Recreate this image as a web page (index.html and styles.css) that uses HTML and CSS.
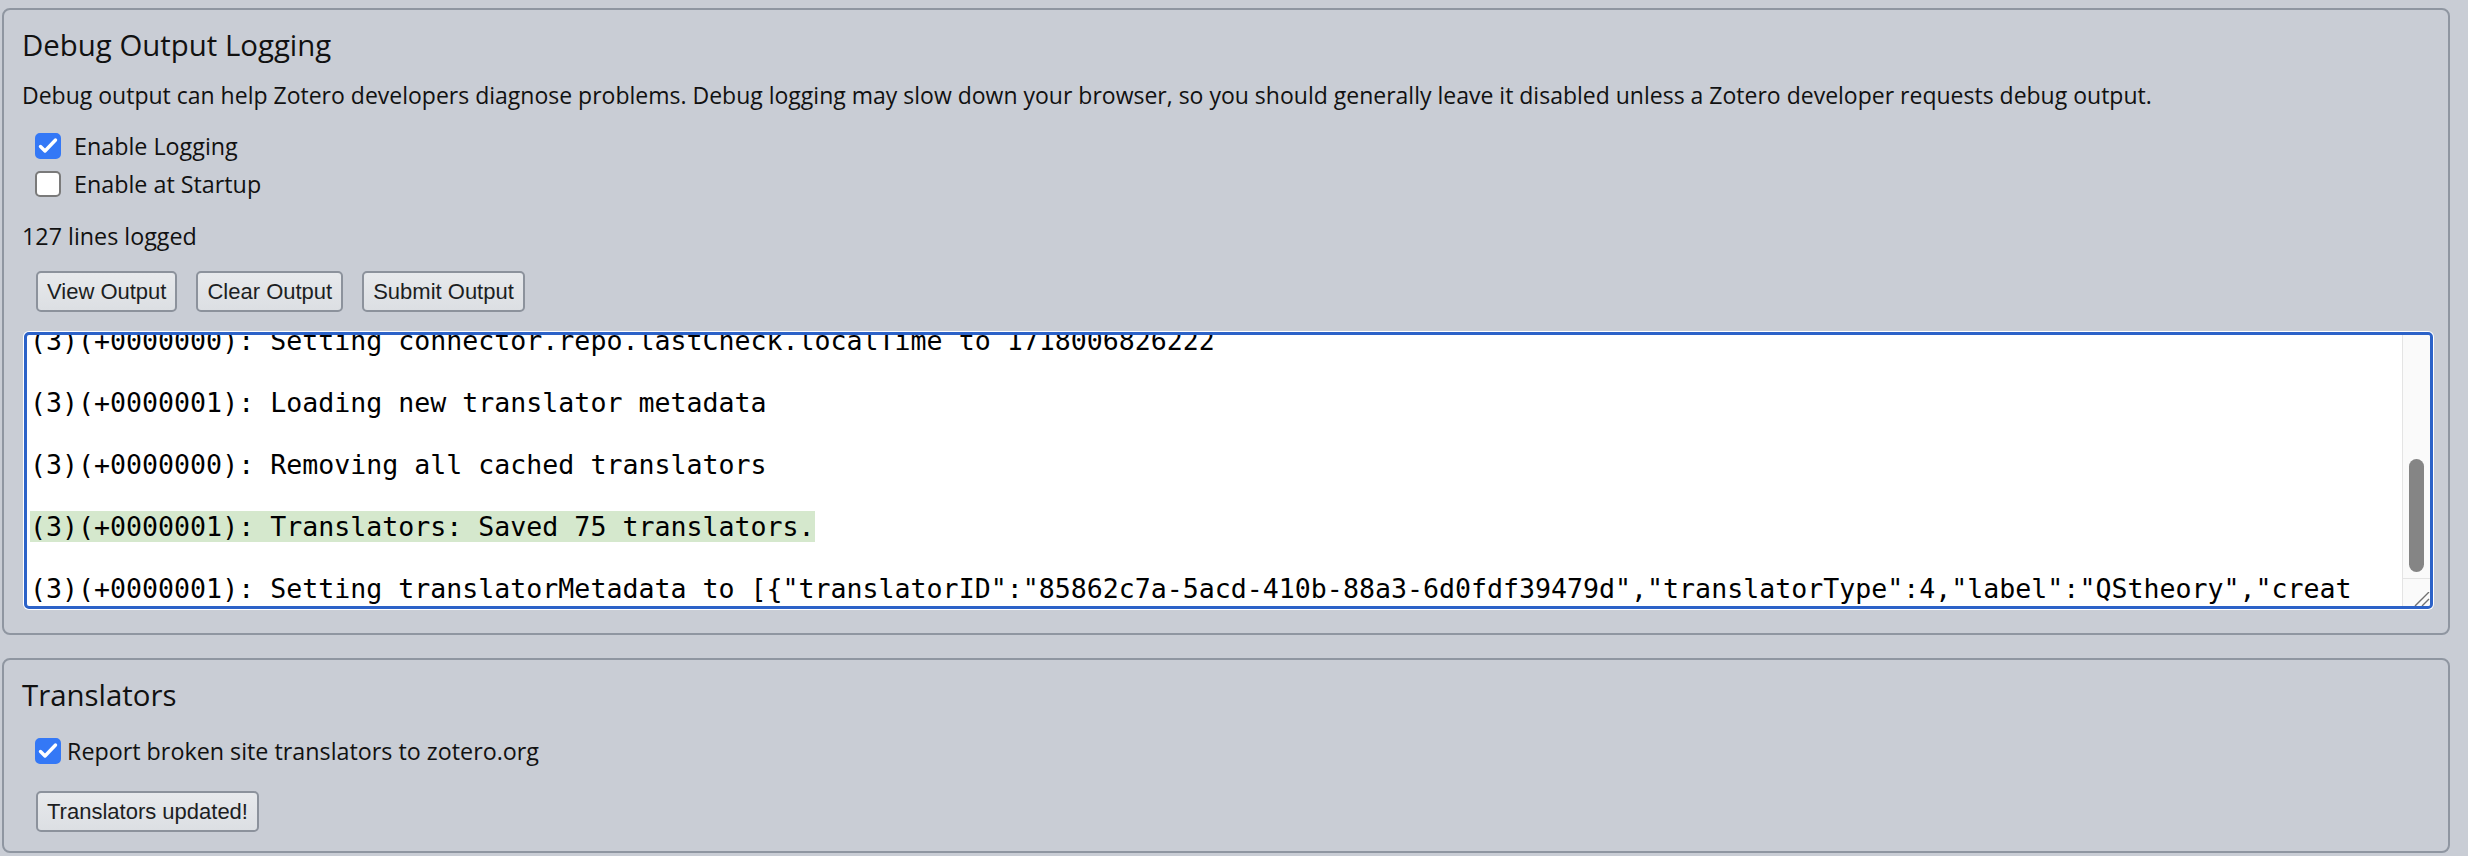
FILE: index.html
```html
<!DOCTYPE html>
<html lang="en">

<head>
    <meta charset="UTF-8">
    <meta name="viewport" content="width=device-width, initial-scale=1.0">
    <title>Advanced</title>
    <link rel="stylesheet" href="styles.css">
</head>

<body>
    <!-- debug output section -->
    <section class="panel">
        <h2 class="panel-title">Debug Output Logging</h2>
        <p class="panel-text">Debug output can help Zotero developers diagnose problems. Debug logging may slow down your browser, so you should generally leave it disabled unless a Zotero developer requests debug output.</p>

        <div class="option-list">
            <label class="option">
                <span class="box box-on">
                    <svg width="22" height="22" viewBox="0 0 22 22"><path d="M3.5 11.5 L8 16 L18.5 5" fill="none" stroke="#fff" stroke-width="3.4" stroke-linecap="round" stroke-linejoin="round"/></svg>
                </span>
                <span>Enable Logging</span>
            </label>
            <label class="option">
                <span class="box"></span>
                <span>Enable at Startup</span>
            </label>
        </div>

        <p class="line-count">127 lines logged</p>

        <div class="button-row">
            <button class="btn">View Output</button>
            <button class="btn">Clear Output</button>
            <button class="btn">Submit Output</button>
        </div>

        <div class="log-box">
            <div class="log-lines">
                <div class="log-inner">
                    <div class="log-line">(3)(+0000000): Setting connector.repo.lastCheck.localTime to 1718006826222</div>
                    <div class="log-line">(3)(+0000001): Loading new translator metadata</div>
                    <div class="log-line">(3)(+0000000): Removing all cached translators</div>
                    <div class="log-line"><span class="log-hl">(3)(+0000001): Translators: Saved 75 translators.</span></div>
                    <div class="log-line">(3)(+0000001): Setting translatorMetadata to [{"translatorID":"85862c7a-5acd-410b-88a3-6d0fdf39479d","translatorType":4,"label":"QStheory","creator":"Zotero"}]</div>
                </div>
            </div>
            <div class="log-scroll">
                <div class="log-thumb"></div>
                <div class="log-corner">
                    <svg width="16" height="14" viewBox="0 0 16 14"><path d="M1 14 L15 0 M8 14 L15 7" stroke="#707070" stroke-width="1.4" fill="none"/></svg>
                </div>
            </div>
        </div>
    </section>

    <!-- translators section -->
    <section class="panel">
        <h2 class="panel-title">Translators</h2>
        <div class="option-list option-list-tr">
            <label class="option option-tight">
                <span class="box box-on">
                    <svg width="22" height="22" viewBox="0 0 22 22"><path d="M3.5 11.5 L8 16 L18.5 5" fill="none" stroke="#fff" stroke-width="3.4" stroke-linecap="round" stroke-linejoin="round"/></svg>
                </span>
                <span>Report broken site translators to zotero.org</span>
            </label>
        </div>
        <div class="button-row button-row-tr">
            <button class="btn">Translators updated!</button>
        </div>
    </section>
</body>

</html>
```

FILE: styles.css
```css
body {
    margin: 0;
    padding: 8px 18px 0 2px;
    background-color: #c9cdd5;
    font-family: "Open Sans", sans-serif;
    color: #111;
    overflow: hidden;
}

.panel {
    border: 2px solid #8f96a1;
    border-radius: 8px;
    padding: 17px 15px 19px 18px;
}

.panel + .panel {
    margin-top: 23px;
}

.panel-title {
    margin: 0;
    font-size: 29.4px;
    line-height: 36px;
    font-weight: 400;
}

.panel-text {
    margin: 17px 0 0;
    font-size: 23px;
    line-height: 30px;
}

.option-list {
    margin-top: 17px;
}

.option-list-tr {
    margin-top: 19px;
}

.option {
    display: flex;
    align-items: center;
    gap: 13px;
    height: 38px;
    padding-left: 13px;
    font-size: 23.3px;
}

.option-tight {
    gap: 6px;
}

.box {
    width: 26px;
    height: 26px;
    box-sizing: border-box;
    border: 2px solid #7a7a7a;
    border-radius: 5px;
    background-color: #fff;
    display: flex;
    align-items: center;
    justify-content: center;
}

.box-on {
    background-color: #3478f6;
    border-color: #3478f6;
}

.line-count {
    margin: 18px 0 0;
    font-size: 23.3px;
    line-height: 30px;
}

.button-row {
    display: flex;
    gap: 19px;
    margin-top: 20px;
    padding-left: 14px;
}

.button-row-tr {
    margin-top: 21px;
}

.btn {
    height: 41px;
    padding: 0 9px;
    border: 2px solid #8c929c;
    border-radius: 5px;
    background: linear-gradient(#e7e9ec, #dcdfe3);
    font-family: "Liberation Sans", Arial, sans-serif;
    font-size: 22px;
    color: #1c1e22;
}

.log-box {
    display: flex;
    height: 277px;
    box-sizing: border-box;
    margin: 20px 0 5px 2px;
    border: 3px solid #2c62c8;
    border-radius: 5px;
    box-shadow: 0 0 0 1px #fff;
    background-color: #fff;
    overflow: hidden;
}

.log-lines {
    flex: 1;
    overflow: hidden;
    padding: 0 38px 0 3px;
    font-family: "DejaVu Sans Mono", monospace;
    font-size: 26.6px;
    color: #000;
}

.log-inner {
    margin-top: -9px;
}

.log-line {
    line-height: 30px;
    margin-bottom: 32px;
    white-space: pre-wrap;
    word-break: break-all;
}

.log-hl {
    background-color: #d5e8cd;
}

.log-scroll {
    width: 28px;
    box-sizing: border-box;
    border-left: 1px solid #e4e4e4;
    background-color: #fafafa;
    display: flex;
    flex-direction: column;
}

.log-thumb {
    width: 15px;
    height: 113px;
    margin: 124px 0 0 6px;
    border-radius: 8px;
    background-color: #858585;
}

.log-corner {
    margin-top: auto;
    height: 28px;
    box-sizing: border-box;
    border-top: 1px solid #e4e4e4;
    display: flex;
    justify-content: flex-end;
    align-items: flex-end;
}

.log-corner svg {
    display: block;
}
```
